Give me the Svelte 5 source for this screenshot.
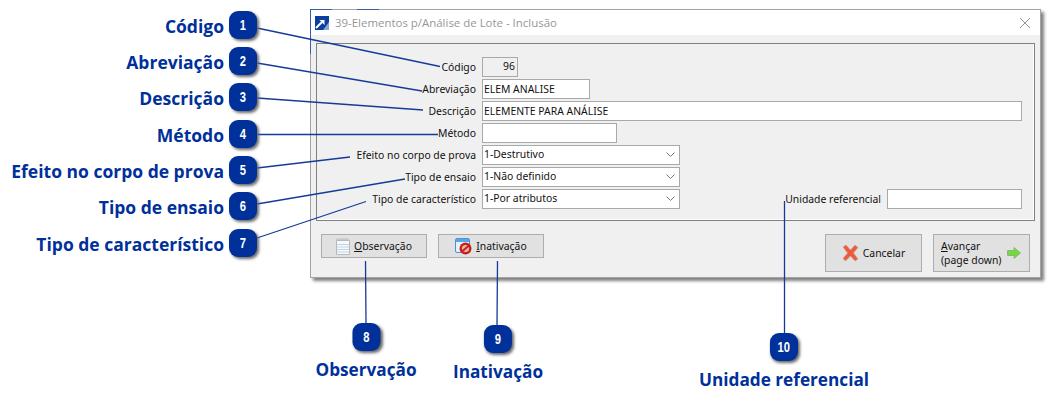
<script lang="ts">
	const leftPins = [
		{ n: 1, label: "Código", top: 11 },
		{ n: 2, label: "Abreviação", top: 47 },
		{ n: 3, label: "Descrição", top: 83 },
		{ n: 4, label: "Método", top: 120 },
		{ n: 5, label: "Efeito no corpo de prova", top: 156 },
		{ n: 6, label: "Tipo de ensaio", top: 192 },
		{ n: 7, label: "Tipo de característico", top: 229 },
	];
	const bottomPins = [
		{ n: 8, label: "Observação", x: 366, top: 323 },
		{ n: 9, label: "Inativação", x: 498, top: 325 },
		{ n: 10, label: "Unidade referencial", x: 784, top: 333 },
	];
	const leaders = [
		[257, 28, 440, 66.5],
		[257, 63, 422, 91],
		[257, 98, 423, 110],
		[257, 134.5, 438, 134.5],
		[257, 168, 350, 157],
		[257, 204, 405, 179],
		[257, 238, 366, 201.5],
		[365.5, 261, 366, 323],
		[497.5, 261, 497, 325],
		[784.5, 201, 784.5, 333],
	];
	const fields = [
		{ label: "Código", value: "96", width: 36, kind: "readonly" },
		{ label: "Abreviação", value: "ELEM ANALISE", width: 108, kind: "text" },
		{ label: "Descrição", value: "ELEMENTE PARA ANÁLISE", width: 540, kind: "text" },
		{ label: "Método", value: "", width: 135, kind: "text" },
		{ label: "Efeito no corpo de prova", value: "1-Destrutivo", width: 198, kind: "combo" },
		{ label: "Tipo de ensaio", value: "1-Não definido", width: 198, kind: "combo" },
		{ label: "Tipo de característico", value: "1-Por atributos", width: 198, kind: "combo" },
	];
</script>

<div class="canvas">
	<div class="window">
		<div class="titlebar">
			<svg class="logo" width="14" height="14" viewBox="0 0 14 14">
				<rect width="14" height="14" fill="#0b3f9e" />
				<path d="M8 14 L14 6 V14 Z" fill="#8fa6cf" />
				<path d="M1 12 L7 6" stroke="#fff" stroke-width="2" />
				<path d="M4.5 4 H9.5 V9 Z" fill="#fff" />
			</svg>
			<span class="title">39-Elementos p/Análise de Lote - Inclusão</span>
			<svg class="close" width="10" height="10" viewBox="0 0 10 10">
				<path d="M0 0 L10 10 M10 0 L0 10" stroke="#8a8a8a" stroke-width="0.9" fill="none" />
			</svg>
		</div>
		<div class="body">
			<div class="panel">
				{#each fields as f, i}
					<div class="row">
						<span class="label">{f.label}</span>
						<div class="field {f.kind}" style="width: {f.width}px">
							<span>{f.value}</span>
							{#if f.kind === "combo"}
								<svg width="9" height="5" viewBox="0 0 9 5">
									<path d="M0.5 0.5 L4.5 4.5 L8.5 0.5" stroke="#777" fill="none" />
								</svg>
							{/if}
						</div>
						{#if i === 6}
							<div class="unit">
								<span class="label-free">Unidade referencial</span>
								<div class="field text unit-input"></div>
							</div>
						{/if}
					</div>
				{/each}
			</div>
			<div class="actions">
				<button class="small first">
					<svg width="14" height="17" viewBox="0 0 14 17">
						<path d="M0.5 2.5 H13.5 V16.5 H0.5 Z" fill="#f7fafd" stroke="#b9b9b9" />
						<path d="M0.5 2 l1.5 -1.5 l1.5 1.5 l1.5 -1.5 l1.5 1.5 l1.5 -1.5 l1.5 1.5 l1.5 -1.5 l1.5 1.5" fill="#fff" stroke="#a5a5a5" />
						<path d="M1 6.5 H13 M1 9 H13 M1 11.5 H13 M1 14 H13" stroke="#c0d4e6" />
					</svg>
					<span><u>O</u>bservação</span>
				</button>
				<button class="small">
					<svg width="17" height="17" viewBox="0 0 17 17">
						<rect x="0.5" y="0.5" width="14" height="14" rx="1.5" fill="#e6f1fb" stroke="#4b93d6" />
						<rect x="1" y="1" width="13" height="3" fill="#5aa5e6" />
						<circle cx="10.5" cy="10.5" r="6" fill="#c8201c" />
						<circle cx="10.5" cy="10.5" r="3.6" fill="#e9b9ae" />
						<path d="M7 13.5 L14 7.5" stroke="#c8201c" stroke-width="2" />
					</svg>
					<span><u>I</u>nativação</span>
				</button>
				<div class="spacer"></div>
				<button class="big cancel">
					<svg width="17" height="18" viewBox="0 0 17 18">
						<path d="M1 3 L4 1 L8.5 6 L13 1 L16 3.5 L11.5 9 L16 15 L13 17 L8.5 12 L3.5 17 L1 14.5 L5.5 9 Z" fill="#ee5a3c" stroke="#c9a898" stroke-width="0.8" />
					</svg>
					<span>Cancelar</span>
				</button>
				<button class="big next">
					<span class="two-lines"><u>A</u>vançar<br />(page down)</span>
					<svg width="14" height="12" viewBox="0 0 14 12">
						<path d="M0.5 3.5 H7 V0.5 L13.5 6 L7 11.5 V8.5 H0.5 Z" fill="#6fdc3c" stroke="#8aa87a" stroke-width="0.8" />
					</svg>
				</button>
			</div>
		</div>
	</div>

	<svg class="leaders" width="1054" height="408" viewBox="0 0 1054 408">
		<path d="M310.5 10 V54 M310 9.5 H332 M357 9.5 H379" stroke="#3a5fa8" fill="none" />
		{#each leaders as l}
			<line x1={l[0]} y1={l[1]} x2={l[2]} y2={l[3]} />
		{/each}
	</svg>

	{#each leftPins as p}
		<div class="pin-left" style="top: {p.top}px">
			<span class="pin-label">{p.label}</span>
			<span class="badge"><span>{p.n}</span></span>
		</div>
	{/each}
	{#each bottomPins as p}
		<div class="pin-bottom" style="left: {p.x}px; top: {p.top}px">
			<span class="badge"><span>{p.n}</span></span>
			<span class="pin-label">{p.label}</span>
		</div>
	{/each}
</div>

<style>
	:global(body) {
		margin: 0;
		background: #fff;
	}
	.canvas {
		position: relative;
		width: 1054px;
		height: 408px;
		overflow: hidden;
		font-family: "Noto Sans", "Liberation Sans", sans-serif;
		font-size: 10.4px;
		color: #111;
	}
	.window {
		position: absolute;
		left: 310px;
		top: 9px;
		width: 731px;
		height: 269px;
		box-sizing: border-box;
		border: 1px solid #a3a3a3;
		background: #f0f0f0;
		box-shadow: 3px 3px 3px #808080;
		display: flex;
		flex-direction: column;
	}
	.titlebar {
		height: 25px;
		background: #fff;
		display: flex;
		align-items: center;
		padding: 0 10px 0 4px;
		flex: none;
	}
	.logo {
		margin-right: 6px;
	}
	.title {
		font-family: "Open Sans", sans-serif;
		font-size: 11.45px;
		color: #979797;
		flex: 1;
	}
	.body {
		flex: 1;
		padding: 8px 5px 0 5px;
	}
	.panel {
		box-sizing: border-box;
		height: 178px;
		border: 1px solid #808080;
		box-shadow: inset -1px -1px 0 #fff;
		padding: 13px 12px 0 0;
		display: flex;
		flex-direction: column;
		gap: 2px;
	}
	.row {
		display: flex;
		align-items: center;
		height: 20px;
	}
	.label {
		width: 159px;
		flex: none;
		text-align: right;
		margin-right: 6px;
	}
	.field {
		box-sizing: border-box;
		height: 20px;
		border: 1px solid #a9a9a9;
		background: #fff;
		display: flex;
		align-items: center;
		justify-content: space-between;
		padding: 0 1px;
		white-space: nowrap;
	}
	.field.readonly {
		background: #f0f0f0;
		justify-content: flex-end;
		padding: 0 2px 2px 0;
	}
	.field.combo {
		padding: 0 4px 2px 1px;
	}
	.unit {
		display: flex;
		align-items: center;
		margin-left: auto;
	}
	.label-free {
		margin-right: 6px;
		white-space: nowrap;
	}
	.unit-input {
		width: 135px;
	}
	.actions {
		display: flex;
		align-items: flex-start;
		padding: 13px 5px 0 5px;
	}
	.spacer {
		flex: 1;
	}
	button {
		box-sizing: border-box;
		font: inherit;
		color: inherit;
		background: #e1e1e1;
		border: 1px solid #adadad;
		padding: 0;
		display: flex;
		align-items: center;
		justify-content: center;
		gap: 4px;
	}
	.small {
		width: 106px;
		height: 24px;
		margin-right: 11px;
	}
	.big {
		width: 97px;
		height: 38px;
		margin-left: 11px;
	}
	.next {
		justify-content: space-between;
		padding: 0 8px 0 7px;
		text-align: left;
	}
	.two-lines {
		line-height: 14px;
		white-space: nowrap;
	}
	.leaders {
		position: absolute;
		left: 0;
		top: 0;
		pointer-events: none;
	}
	.leaders line {
		stroke: #153a9a;
		stroke-width: 1.3;
	}
	.pin-left {
		position: absolute;
		left: 0;
		width: 257px;
		display: flex;
		justify-content: flex-end;
		align-items: center;
		gap: 5px;
	}
	.pin-left .pin-label {
		font-size: 17.5px;
		padding-top: 1px;
	}
	.pin-bottom {
		position: absolute;
		transform: translateX(-50%);
		display: flex;
		flex-direction: column;
		align-items: center;
		gap: 8px;
	}
	.pin-label {
		font-family: "Open Sans", "Noto Sans", sans-serif;
		font-weight: 700;
		font-size: 17.2px;
		line-height: 22px;
		color: #00309a;
		white-space: nowrap;
	}
	.badge {
		width: 28px;
		height: 28px;
		border-radius: 9px;
		background: #00309a;
		box-shadow: 2px 2px 3px #6a6a6a;
		color: #fff;
		font-family: "Liberation Sans", sans-serif;
		font-weight: 700;
		font-size: 14px;
		display: flex;
		align-items: center;
		justify-content: center;
		flex: none;
	}
	.badge span {
		display: block;
		transform: scaleX(0.8);
	}
</style>
